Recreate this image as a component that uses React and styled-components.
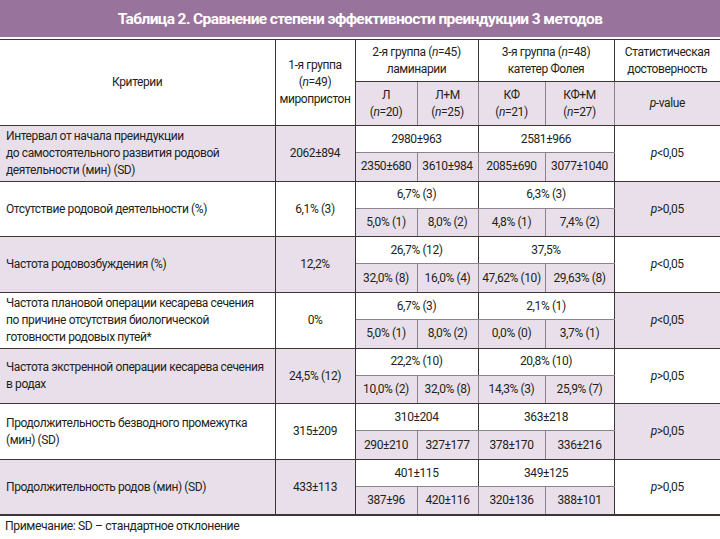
import React from "react";
import styled, { createGlobalStyle } from "styled-components";

const Global = createGlobalStyle`
  html, body { margin: 0; padding: 0; background: #ffffff; }
  body { font-family: Roboto, "Liberation Sans", sans-serif; color: #231f20; }
`;

const LIGHT = "#e9dfea";
const DARK = "#3d3434";
const SUB = "#8b8489";

const Page = styled.div`
  width: 720px;
  display: flex;
  flex-direction: column;
`;

const TitleBar = styled.div`
  height: 37px;
  background: #98739b;
  color: #ffffff;
  font-weight: 700;
  font-size: 15.5px;
  letter-spacing: -0.6px;
  display: flex;
  align-items: center;
  justify-content: center;
  margin-bottom: 2px;
`;

const Table = styled.table`
  width: 720px;
  border-collapse: collapse;
  table-layout: fixed;
  font-size: 12px;
  letter-spacing: -0.4px;
  line-height: 17px;
  border-top: 1px solid ${DARK};
  border-bottom: 2px solid ${DARK};
`;

const Row = styled.tr`
  height: ${(p) => p.$h}px;
`;

const Cell = styled.td`
  padding: 0 ${(p) => (p.$left ? "2px 0 6px" : "0")};
  text-align: ${(p) => (p.$left ? "left" : "center")};
  vertical-align: middle;
  background: ${(p) => (p.$shade ? LIGHT : "#ffffff")};
  border-left: 1px solid ${DARK};
  border-right: 1px solid ${DARK};
  border-top: 1px solid ${(p) => (p.$subTop ? SUB : DARK)};
  border-bottom: 1px solid ${(p) => (p.$subBottom ? SUB : DARK)};
  &:first-child { border-left: none; }
  &:last-child { border-right: none; }
  white-space: nowrap;
  overflow: hidden;
`;

const SubCell = styled(Cell)`
  border-left: 1px solid ${SUB};
  border-right: 1px solid ${SUB};
`;

const Note = styled.div`
  font-size: 12.2px;
  letter-spacing: -0.4px;
  padding: 3px 0 0 5px;
`;

const N = ({ v }) => (
  <>
    (<i>n</i>={v})
  </>
);

const rows = [
  {
    crit: ["Интервал от начала преиндукции", "до самостоятельного развития родовой", "деятельности (мин) (SD)"],
    g1: "2062±894",
    g2: "2980±963",
    g3: "2581±966",
    subs: ["2350±680", "3610±984", "2085±690", "3077±1040"],
    p: "<0,05",
  },
  {
    crit: ["Отсутствие родовой деятельности (%)"],
    g1: "6,1% (3)",
    g2: "6,7% (3)",
    g3: "6,3% (3)",
    subs: ["5,0% (1)", "8,0% (2)", "4,8% (1)", "7,4% (2)"],
    p: ">0,05",
  },
  {
    crit: ["Частота родовозбуждения (%)"],
    g1: "12,2%",
    g2: "26,7% (12)",
    g3: "37,5%",
    subs: ["32,0% (8)", "16,0% (4)", "47,62% (10)", "29,63% (8)"],
    p: "<0,05",
  },
  {
    crit: ["Частота плановой операции кесарева сечения", "по причине отсутствия биологической", "готовности родовых путей*"],
    g1: "0%",
    g2: "6,7% (3)",
    g3: "2,1% (1)",
    subs: ["5,0% (1)", "8,0% (2)", "0,0% (0)", "3,7% (1)"],
    p: "<0,05",
  },
  {
    crit: ["Частота экстренной операции кесарева сечения", "в родах"],
    g1: "24,5% (12)",
    g2: "22,2% (10)",
    g3: "20,8% (10)",
    subs: ["10,0% (2)", "32,0% (8)", "14,3% (3)", "25,9% (7)"],
    p: ">0,05",
  },
  {
    crit: ["Продолжительность безводного промежутка", "(мин) (SD)"],
    g1: "315±209",
    g2: "310±204",
    g3: "363±218",
    subs: ["290±210", "327±177", "378±170", "336±216"],
    p: ">0,05",
  },
  {
    crit: ["Продолжительность родов (мин) (SD)"],
    g1: "433±113",
    g2: "401±115",
    g3: "349±125",
    subs: ["387±96", "420±116", "320±136", "388±101"],
    p: ">0,05",
  },
];

export default function App() {
  return (
    <Page>
      <Global />
      <TitleBar>Таблица 2. Сравнение степени эффективности преиндукции 3 методов</TitleBar>
      <Table>
        <colgroup>
          <col style={{ width: 275 }} />
          <col style={{ width: 80 }} />
          <col style={{ width: 62 }} />
          <col style={{ width: 61 }} />
          <col style={{ width: 67 }} />
          <col style={{ width: 69 }} />
          <col style={{ width: 106 }} />
        </colgroup>
        <tbody>
          <Row $h={42}>
            <Cell rowSpan={2}>Критерии</Cell>
            <Cell rowSpan={2}>
              1-я группа
              <br />
              <N v={49} />
              <br />
              миропристон
            </Cell>
            <Cell colSpan={2}>
              2-я группа <N v={45} />
              <br />
              ламинарии
            </Cell>
            <Cell colSpan={2}>
              3-я группа <N v={48} />
              <br />
              катетер Фолея
            </Cell>
            <Cell>
              Статистическая
              <br />
              достоверность
            </Cell>
          </Row>
          <Row $h={44}>
            <SubCell $shade>
              Л<br />
              <N v={20} />
            </SubCell>
            <SubCell $shade>
              Л+М
              <br />
              <N v={25} />
            </SubCell>
            <SubCell $shade>
              КФ
              <br />
              <N v={21} />
            </SubCell>
            <SubCell $shade>
              КФ+М
              <br />
              <N v={27} />
            </SubCell>
            <Cell $shade>
              <i>p</i>-value
            </Cell>
          </Row>
          {rows.map((r, i) => {
            const shade = i % 2 === 0;
            return (
              <React.Fragment key={i}>
                <Row $h={27}>
                  <Cell rowSpan={2} $left $shade={shade}>
                    {r.crit.map((l, j) => (
                      <React.Fragment key={j}>
                        {j > 0 && <br />}
                        {l}
                      </React.Fragment>
                    ))}
                  </Cell>
                  <Cell rowSpan={2} $shade={shade}>
                    {r.g1}
                  </Cell>
                  <Cell colSpan={2} $subBottom>
                    {r.g2}
                  </Cell>
                  <Cell colSpan={2} $subBottom>
                    {r.g3}
                  </Cell>
                  <Cell rowSpan={2} $shade={!shade}>
                    <i>p</i>
                    {r.p}
                  </Cell>
                </Row>
                <Row $h={28.7}>
                  {r.subs.map((s, j) => (
                    <SubCell key={j} $shade $subTop>
                      {s}
                    </SubCell>
                  ))}
                </Row>
              </React.Fragment>
            );
          })}
        </tbody>
      </Table>
      <Note>Примечание: SD – стандартное отклонение</Note>
    </Page>
  );
}
